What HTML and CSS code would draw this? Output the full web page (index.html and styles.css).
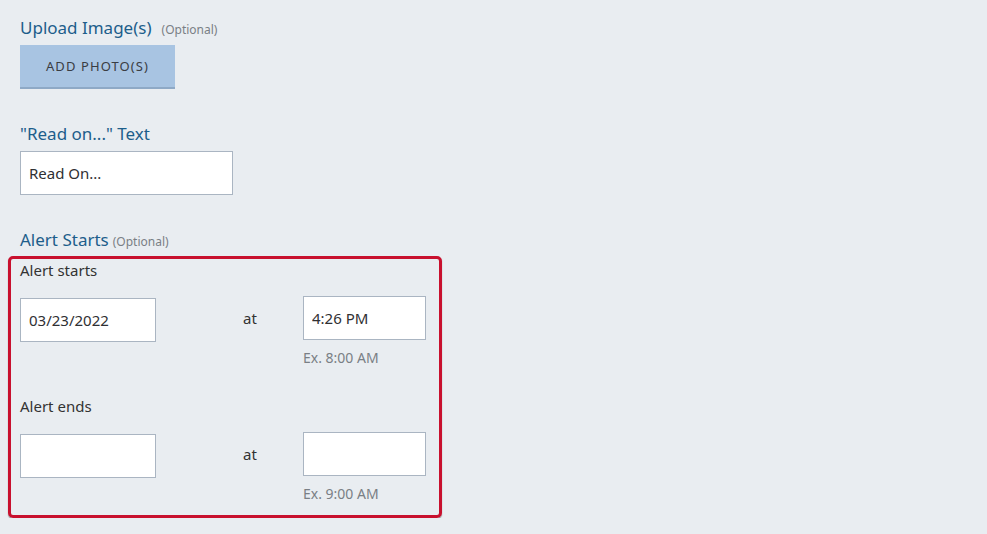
FILE: index.html
```html
<!DOCTYPE html>
<html lang="en">
<head>
<meta charset="utf-8">
<title>Alert form</title>
<link rel="stylesheet" href="styles.css">
</head>
<body>
<main class="form">
  <section class="field upload">
    <div class="label-row"><span class="label">Upload Image(s)</span><span class="optional opt-upload">(Optional)</span></div>
    <button class="btn-photo" type="button">ADD PHOTO(S)</button>
  </section>

  <section class="field readon">
    <div class="label-row"><span class="label">"Read on..." Text</span></div>
    <input class="text-input readon-input" type="text" value="Read On...">
  </section>

  <section class="field alert">
    <div class="label-row"><span class="label">Alert Starts</span><span class="optional opt-alert">(Optional)</span></div>
    <div class="alert-box">
      <div class="sub-label">Alert starts</div>
      <div class="dt-row">
        <input class="text-input date-input" type="text" value="03/23/2022">
        <span class="at">at</span>
        <div class="time-col">
          <input class="text-input time-input" type="text" value="4:26 PM">
          <div class="hint">Ex. 8:00 AM</div>
        </div>
      </div>
      <div class="sub-label ends">Alert ends</div>
      <div class="dt-row">
        <input class="text-input date-input" type="text" value="">
        <span class="at">at</span>
        <div class="time-col">
          <input class="text-input time-input" type="text" value="">
          <div class="hint">Ex. 9:00 AM</div>
        </div>
      </div>
    </div>
  </section>
</main>
</body>
</html>
```

FILE: styles.css
```css
html, body {
  margin: 0;
  padding: 0;
  background: #e9edf1;
  font-family: "Noto Sans", "Open Sans", sans-serif;
  color: #333333;
}

.form {
  padding: 17px 0 0 20px;
}

.label-row {
  display: flex;
  align-items: baseline;
}

.label {
  font-size: 17px;
  line-height: 22px;
  color: #1d5e8b;
}

.optional {
  font-size: 12px;
  color: #7a7f85;
}

.opt-upload { margin-left: 10px; }
.opt-alert { margin-left: 4px; }

.btn-photo {
  display: block;
  margin-top: 6px;
  width: 155px;
  height: 44px;
  border: none;
  border-bottom: 2px solid #8ea9c6;
  background: #a8c4e2;
  color: #3a3d42;
  font-family: inherit;
  font-size: 13px;
  letter-spacing: 1.1px;
  padding: 0;
  cursor: pointer;
}

.readon {
  margin-top: 34px;
}

.text-input {
  display: block;
  box-sizing: border-box;
  height: 44px;
  border: 1px solid #aab5c2;
  background: #ffffff;
  font-family: inherit;
  font-size: 15px;
  color: #2f3033;
  padding: 0 8px;
  outline: none;
}

.readon-input {
  width: 213px;
  margin-top: 6px;
}

.alert {
  margin-top: 34px;
}

.alert-box {
  margin: 5px 0 0 -12px;
  width: 434px;
  box-sizing: border-box;
  border: 3px solid #c8102e;
  border-radius: 5px;
  box-shadow: 0 1px 1px rgba(60, 60, 60, 0.6);
  padding: 2px 9px 12px 9px;
}

.sub-label {
  font-size: 15px;
  line-height: 18px;
  color: #333333;
}

.sub-label.ends {
  margin-top: 30px;
}

.dt-row {
  display: grid;
  grid-template-columns: 136px 147px 123px;
  margin-top: 17px;
}

.date-input {
  width: 136px;
  margin-top: 2px;
}

.at {
  font-size: 15px;
  padding-left: 87px;
  align-self: start;
  line-height: 44px;
}

.time-input {
  width: 123px;
}

.hint {
  margin-top: 9px;
  font-size: 14px;
  line-height: 18px;
  color: #7a7f85;
}
```
